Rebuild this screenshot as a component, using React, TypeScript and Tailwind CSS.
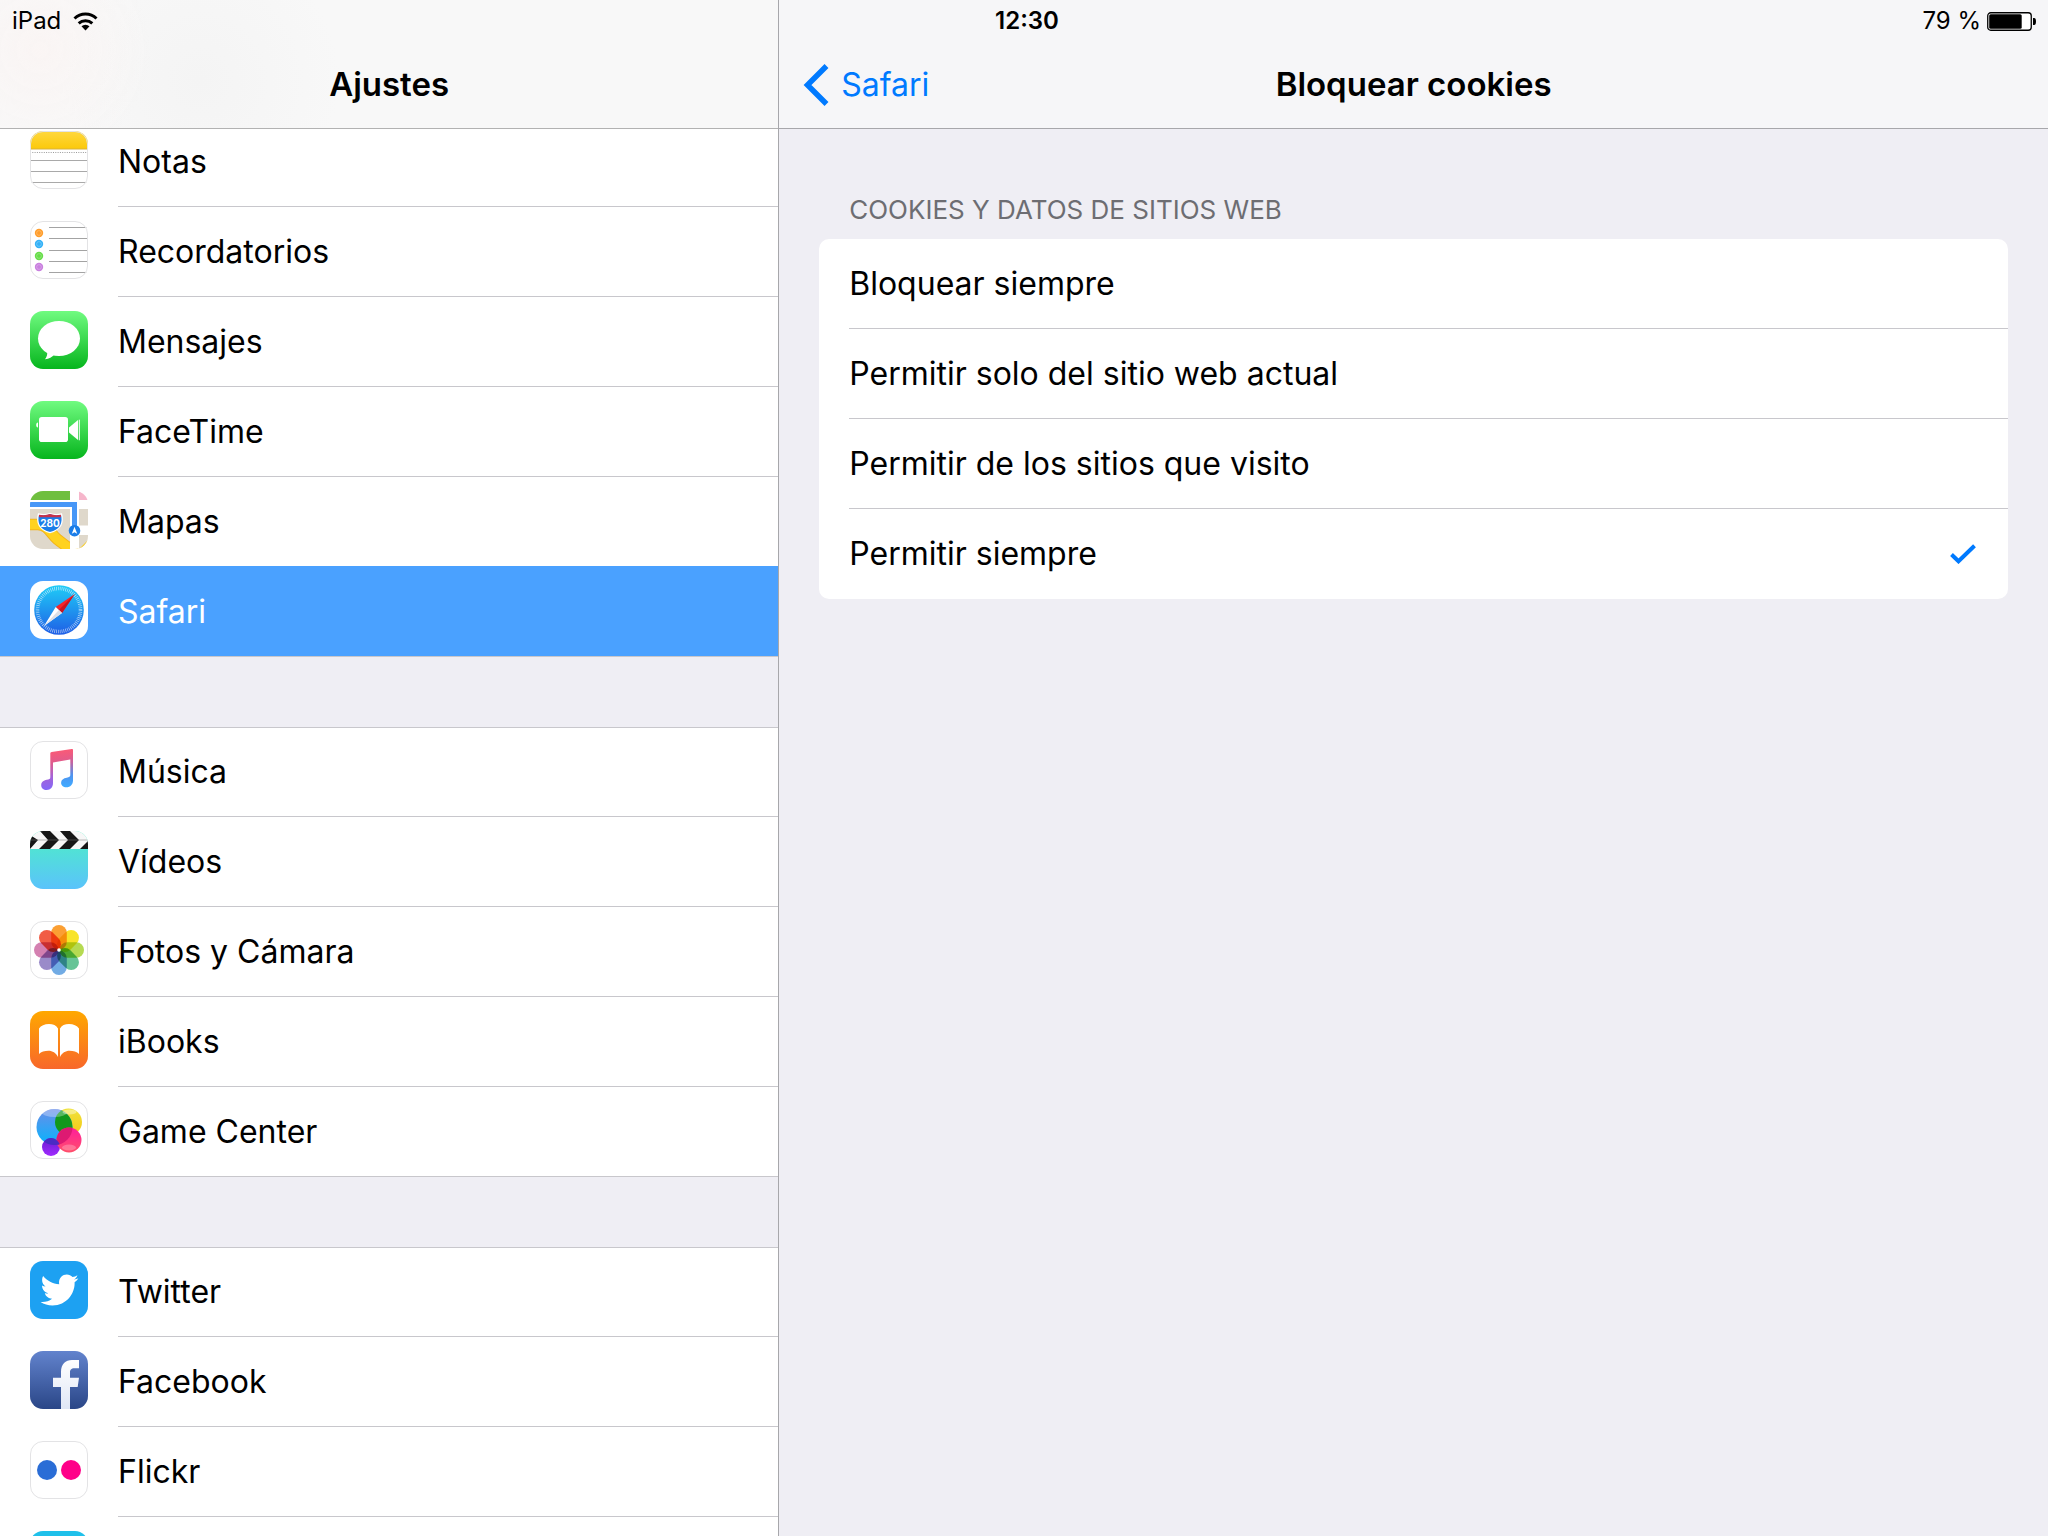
import { useState, type ReactNode } from "react";
import { FaTwitter } from "react-icons/fa";

/* App icons are all drawn on a 58x58 tile. */
function Tile({ id, fill = "#fff", outline = false, children }: { id: string; fill?: string; outline?: boolean; children?: ReactNode }) {
  return (
    <svg className="size-[58px] shrink-0" viewBox="0 0 58 58" aria-hidden="true">
      <defs>
        <clipPath id={`${id}-clip`}>
          <rect width="58" height="58" rx="13" />
        </clipPath>
      </defs>
      <g clipPath={`url(#${id}-clip)`}>
        <rect width="58" height="58" fill={fill} />
        {children}
      </g>
      {outline && <rect x="0.5" y="0.5" width="57" height="57" rx="12.5" fill="none" stroke="#e3e3e5" />}
    </svg>
  );
}

function Gradient({ id, from, to }: { id: string; from: string; to: string }) {
  return (
    <linearGradient id={id} x1="0" y1="0" x2="0" y2="1">
      <stop offset="0" stopColor={from} />
      <stop offset="1" stopColor={to} />
    </linearGradient>
  );
}

function NotesIcon() {
  return (
    <Tile id="notes" outline>
      <Gradient id="notes-top" from="#ffd83f" to="#fbc90a" />
      <path d="M0 21.5H58" stroke="#9a9a9a" strokeDasharray="1 1.3" />
      <path d="M0 29.5H58M0 40.5H58M0 51.5H58" stroke="#a9a9a9" />
      <rect x="0" y="0" width="58" height="18" fill="url(#notes-top)" />
      <path d="M0 18H58" stroke="#d9b23a" />
    </Tile>
  );
}

function RemindersIcon() {
  const dots = [
    { y: 12, color: "#ff9d2b" },
    { y: 23, color: "#33b1f7" },
    { y: 35, color: "#66dd48" },
    { y: 46, color: "#c97fdf" },
  ];
  return (
    <Tile id="reminders" outline>
      <path d="M19 6.5H58M19 17.5H58M19 29.5H58M19 40.5H58M19 51.5H58" stroke="#a3a3a3" />
      {dots.map((d) => (
        <g key={d.y}>
          <circle cx="9" cy={d.y} r="4.2" fill={d.color} />
          <circle cx="9" cy={d.y} r="2.4" fill="none" stroke="#fff" strokeOpacity="0.35" strokeWidth="0.7" />
        </g>
      ))}
    </Tile>
  );
}

function MessagesIcon() {
  return (
    <Tile id="messages" fill="url(#messages-bg)">
      <Gradient id="messages-bg" from="#70fb80" to="#06b51d" />
      <ellipse cx="29" cy="27.5" rx="21" ry="17.6" fill="#fff" />
      <path d="M17 40c0.8 3.5-0.3 6-2 8.3 4.2-0.4 7-2 9.500-4.800z" fill="#fff" />
    </Tile>
  );
}

function FaceTimeIcon() {
  return (
    <Tile id="facetime" fill="url(#facetime-bg)">
      <Gradient id="facetime-bg" from="#70fb80" to="#06b51d" />
      <rect x="9" y="16" width="29" height="25" rx="2.8" fill="#fff" />
      <path d="M8 21.5v5c-1.3 0-1.8-1-1.8-2.5S6.700 21.5 8 21.5z" fill="#fff" />
      <path d="M39 26.5L48 19v20l-9-7.500z" fill="#fff" />
      <path d="M49.3 18.7v20.600" stroke="#fff" strokeWidth="1" />
    </Tile>
  );
}

function MapsIcon() {
  return (
    <Tile id="maps">
      <rect width="40" height="9" fill="#6fbf3f" />
      <rect x="49" width="9" height="9" fill="#f6b6cb" />
      <rect y="18" width="40" height="40" fill="#dfd8cb" />
      <rect x="49" y="18" width="9" height="16.5" fill="#dfd8cb" />
      <rect x="49" y="44" width="9" height="14" fill="#dfd8cb" />
      <path d="M0 33.5H8C18 34 21 43 27 48S37 55 45 62" fill="none" stroke="#f3b41c" strokeWidth="11.500" />
      <path d="M0 33.5H8C18 34 21 43 27 48S37 55 45 62" fill="none" stroke="#ffd21f" strokeWidth="9.500" />
      <path d="M49 58L58 49v9z" fill="#fbd02a" />
      <rect x="40" y="18" width="9" height="40" fill="#fff" />
      <path d="M0 13.5H44.5V40" fill="none" stroke="#4797f7" strokeWidth="5" />
      <path d="M8.500 23c4 1 8 1 11.500-0.500 3.500 1.500 7.500 1.500 11.500 0.500 2.500 9-1 16-11.500 18.700C9.500 39 6 32 8.500 23z" fill="#1b7de8" stroke="#fff" strokeWidth="1.300" />
      <path d="M9 23.700c4 0.800 7.500 0.600 11-0.600 3.500 1.200 7 1.400 11 0.600v2.600H9z" fill="#c8324a" />
      <text x="20" y="36" textAnchor="middle" fontFamily="Inter, sans-serif" fontWeight="700" fontSize="10" fill="#fff">
        280
      </text>
      <circle cx="44.5" cy="39.700" r="5.800" fill="#1b7de8" />
      <path d="M44.5 35.800l2.700 7-2.700-1.600-2.700 1.600z" fill="#fff" />
    </Tile>
  );
}

function SafariIcon() {
  return (
    <Tile id="safari">
      <Gradient id="safari-bg" from="#1fcdf7" to="#1f5ee6" />
      <circle cx="29" cy="29" r="24.800" fill="url(#safari-bg)" />
      <circle cx="29" cy="29" r="21.500" fill="none" stroke="#fff" strokeOpacity="0.65" strokeWidth="3.600" strokeDasharray="0.7 1.180" />
      <path d="M44.800 13L25.700 26l6.300 6z" fill="#f5242b" />
      <path d="M44.800 13L28.900 29l3.100 3z" fill="#c9151f" />
      <path d="M14 45l11.700-19 6.300 6z" fill="#fff" />
      <path d="M14 45l14.900-16 3.100 3z" fill="#dcdfe6" />
    </Tile>
  );
}

function MusicIcon() {
  return (
    <Tile id="music" outline>
      <linearGradient id="music-note" x1="26" y1="8" x2="30" y2="50" gradientUnits="userSpaceOnUse">
        <stop offset="0" stopColor="#fd5a74" />
        <stop offset="0.32" stopColor="#e05b8d" />
        <stop offset="0.65" stopColor="#a463d8" />
        <stop offset="1" stopColor="#7d68ff" />
      </linearGradient>
      <linearGradient id="music-right" x1="0" y1="8" x2="0" y2="45" gradientUnits="userSpaceOnUse">
        <stop offset="0" stopColor="#fd5a74" />
        <stop offset="0.35" stopColor="#c8629e" />
        <stop offset="0.7" stopColor="#4f92ee" />
        <stop offset="1" stopColor="#41a9ff" />
      </linearGradient>
      <path d="M20.300 12.600c0-0.900 0.500-1.300 1.300-1.500L41.700 8c0.900-0.200 1.300 0.300 1.300 1v9l-20 3.500v20.500c0 4-2.300 7-6.300 7-3.300 0-5.500-2-5.500-4.800 0-3 2.300-4.900 5.500-5.400 2.400-0.400 3.600-0.700 3.600-2.600z" fill="url(#music-note)" />
      <path d="M40.300 17V34c0 1.800-1 2.300-3.500 2.700-3.400 0.500-5.700 2.200-5.700 5 0 2.500 2 4.500 5.200 4.500 4.300 0 6.700-2.700 6.700-7V9z" fill="url(#music-right)" />
    </Tile>
  );
}

function VideosIcon() {
  return (
    <Tile id="videos" fill="url(#videos-bg)">
      <Gradient id="videos-bg" from="#4df0c4" to="#5ac3fb" />
      <rect width="58" height="18" fill="#f7f7f7" />
      <path d="M0 4L8 9 0 18zM10 0H20L29 9 20 18H9L18 9zM30 0H40L49 9 40 18H29L38 9zM50 18L58 10V18z" fill="#161616" />
      <path d="M0 9H58" stroke="#777" strokeWidth="0.500" />
    </Tile>
  );
}

function PhotosIcon() {
  const petals = ["#fb9f33", "#f8e42a", "#b5da52", "#66c496", "#71abe4", "#9a8bc9", "#d480b1", "#f15c45"];
  return (
    <Tile id="photos" outline>
      {petals.map((color, i) => (
        <rect key={color} x="21.200" y="4" width="15.600" height="24.500" rx="7.800" fill={color} transform={`rotate(${i * 45} 29 29)`} style={{ mixBlendMode: "multiply" }} />
      ))}
      <circle cx="29" cy="29" r="1.800" fill="#fff" />
    </Tile>
  );
}

function BooksIcon() {
  return (
    <Tile id="books" fill="url(#books-bg)">
      <Gradient id="books-bg" from="#ffa800" to="#f8672a" />
      <path d="M28 46V17.500C26.500 14.300 23 13 19 13c-4.500 0-8 1.500-10 4.500V43c2.200-2 5.500-3.200 9.500-3.200S26 42 28 46z" fill="#fff" />
      <path d="M30 46V17.500C31.500 14.300 35 13 39 13c4.500 0 8 1.500 10 4.500V43c-2.200-2-5.500-3.200-9.500-3.200S32 42 30 46z" fill="#fff" />
    </Tile>
  );
}

function GameCenterIcon() {
  return (
    <Tile id="games" outline>
      <Gradient id="games-blue" from="#6a8de8" to="#06b4fd" />
      <Gradient id="games-yellow" from="#efe23a" to="#f5c816" />
      <Gradient id="games-pink" from="#ff1d9c" to="#ff4f6a" />
      <Gradient id="games-purple" from="#6a1bd0" to="#a02bff" />
      <clipPath id="games-blue-clip">
        <circle cx="24.500" cy="26" r="18" />
      </clipPath>
      <circle cx="38.500" cy="21" r="13.500" fill="url(#games-yellow)" />
      <circle cx="24.500" cy="26" r="18" fill="url(#games-blue)" />
      <g clipPath="url(#games-blue-clip)">
        <circle cx="38.500" cy="21" r="13.500" fill="#12981c" />
        <ellipse cx="24.500" cy="12" rx="12" ry="4" fill="#fff" opacity="0.300" />
      </g>
      <ellipse cx="39.500" cy="11" rx="7" ry="2.500" fill="#fff" opacity="0.400" />
      <circle cx="21" cy="46" r="9" fill="url(#games-purple)" />
      <circle cx="39" cy="39" r="12.500" fill="url(#games-pink)" />
      <g clipPath="url(#games-blue-clip)">
        <circle cx="39" cy="39" r="12.500" fill="#dd1a72" />
        <circle cx="21" cy="46" r="9" fill="#4a2bc4" />
      </g>
      <ellipse cx="39" cy="46.500" rx="7" ry="3" fill="#fff" opacity="0.250" />
    </Tile>
  );
}

function TwitterIcon() {
  return (
    <Tile id="twitter" fill="#1da1f2">
      <FaTwitter x="10.500" y="10" size={38} color="#fff" />
    </Tile>
  );
}

function FacebookIcon() {
  return (
    <Tile id="facebook" fill="url(#facebook-bg)">
      <Gradient id="facebook-bg" from="#6283cd" to="#2a4687" />
      <Gradient id="facebook-f" from="#ffffff" to="#dfe6f5" />
      <path d="M31 58V36H23V26.700H31V21C31 13 35.500 9 42 9H49V17.300H44.500C41 17.300 40 19 40 21.500V26.700H49L47.700 36H40V58z" fill="url(#facebook-f)" />
    </Tile>
  );
}

function FlickrIcon() {
  return (
    <Tile id="flickr" outline>
      <circle cx="17" cy="29" r="10" fill="#2a6dd6" />
      <circle cx="41" cy="29" r="10" fill="#ff0089" />
    </Tile>
  );
}

type Entry = { label: string; icon: ReactNode };

const groups: Entry[][] = [
  [
    { label: "Notas", icon: <NotesIcon /> },
    { label: "Recordatorios", icon: <RemindersIcon /> },
    { label: "Mensajes", icon: <MessagesIcon /> },
    { label: "FaceTime", icon: <FaceTimeIcon /> },
    { label: "Mapas", icon: <MapsIcon /> },
    { label: "Safari", icon: <SafariIcon /> },
  ],
  [
    { label: "Música", icon: <MusicIcon /> },
    { label: "Vídeos", icon: <VideosIcon /> },
    { label: "Fotos y Cámara", icon: <PhotosIcon /> },
    { label: "iBooks", icon: <BooksIcon /> },
    { label: "Game Center", icon: <GameCenterIcon /> },
  ],
  [
    { label: "Twitter", icon: <TwitterIcon /> },
    { label: "Facebook", icon: <FacebookIcon /> },
    { label: "Flickr", icon: <FlickrIcon /> },
    { label: "", icon: <Tile id="last" fill="#1fc0ea" /> },
  ],
];

const options = ["Bloquear siempre", "Permitir solo del sitio web actual", "Permitir de los sitios que visito", "Permitir siempre"];

function StatusBar() {
  return (
    <div className="absolute inset-x-0 top-0 z-20 grid h-[42px] grid-cols-3 items-center px-3 text-2xl">
      <div className="flex items-center gap-3">
        <span>iPad</span>
        <svg className="h-[19px] w-[25px]" viewBox="0 0 25 19" fill="none" stroke="#000" strokeWidth="3" aria-hidden="true">
          <path d="M1.500 6.500a16 16 0 0 1 22 0" />
          <path d="M5.700 11.300a10 10 0 0 1 13.600 0" />
          <path d="M12.500 18.500l-4-4.200a5.800 5.800 0 0 1 8 0z" fill="#000" stroke="none" />
        </svg>
      </div>
      <span className="pl-1.5 text-center font-semibold">12:30</span>
      <div className="flex items-center justify-end gap-1.5">
        <span>79 %</span>
        <svg className="h-[19px] w-[49px]" viewBox="0 0 49 19" aria-hidden="true">
          <rect x="0.750" y="0.750" width="43.500" height="17.500" rx="3" fill="#fff" stroke="#000" strokeWidth="1.300" />
          <rect x="2.200" y="2.200" width="32.500" height="14.600" rx="1.500" fill="#000" />
          <path d="M46 6h1.200c1 0 1.800 1 1.800 3.500S48.200 13 47.200 13H46z" fill="#000" />
        </svg>
      </div>
    </div>
  );
}

function Sidebar() {
  return (
    <aside className="flex w-[38%] shrink-0 flex-col">
      <header className="relative z-10 flex h-[129px] shrink-0 items-center justify-center border-b border-[#b2b2b2] bg-[#f8f8f8] bg-[radial-gradient(circle_at_40px_50px,#faf5f4_0,transparent_110px),radial-gradient(circle_at_200px_80px,#f4f4f4_0,transparent_140px)] pt-[42px]">
        <h1 className="text-[33px] font-semibold">Ajustes</h1>
      </header>
      <nav className="-mt-3 flex flex-col gap-[70px]">
        {groups.map((group, i) => (
          <ul key={i} className="bg-white shadow-[inset_0_1px_0_#c8c7cc,inset_0_-1px_0_#c8c7cc]">
            {group.map(({ label, icon }, j) => {
              const active = label === "Safari";
              return (
                <li key={j} className={active ? "relative bg-[#4aa1ff] text-white shadow-[0_-1px_0_#4aa1ff,inset_0_-1px_0_#c8c7cc]" : ""}>
                  <a href="#" aria-current={active ? "page" : undefined} className="flex h-[90px] items-center gap-[30px] pl-[30px]">
                    <span className="pb-1">{icon}</span>
                    <span className={`flex h-full flex-1 items-center ${j === group.length - 1 ? "" : "border-b border-[#c8c7cc]"}`}>{label}</span>
                  </a>
                </li>
              );
            })}
          </ul>
        ))}
      </nav>
    </aside>
  );
}

function CookieSettings() {
  const [selected, setSelected] = useState("Permitir siempre");

  return (
    <main className="min-w-0 flex-1 border-l border-[#a7a7ab] bg-[#efeef4]">
      <header className="grid h-[129px] grid-cols-[1fr_auto_1fr] items-center border-b border-[#a7a7ab] bg-[#f6f6f8] pt-[42px]">
        <button type="button" className="flex items-center gap-3 justify-self-start pl-6 text-[#007aff]">
          <svg className="h-[42px] w-[26px]" viewBox="0 0 26 42" fill="none" stroke="currentColor" strokeWidth="5.500" aria-hidden="true">
            <path d="M23.500 2L4.500 21l19 19" />
          </svg>
          Safari
        </button>
        <h2 className="text-[33px] font-semibold">Bloquear cookies</h2>
      </header>

      <fieldset aria-labelledby="cookies-title" className="px-10 pt-16">
        <p id="cookies-title" className="pb-3 pl-[30px] text-[26px] leading-[34px] text-[#6d6d72]">
          COOKIES Y DATOS DE SITIOS WEB
        </p>
        <div className="overflow-hidden rounded-[10px] bg-white pl-[30px]">
          {options.map((option) => (
            <label key={option} className="flex h-[90px] items-center justify-between border-b border-[#c8c7cc] pr-8 last:border-b-0">
              {option}
              <input type="radio" name="cookies" className="peer sr-only" checked={selected === option} onChange={() => setSelected(option)} />
              <svg className="hidden h-5 w-[26px] text-[#007aff] peer-checked:block" viewBox="0 0 26 20" fill="none" stroke="currentColor" strokeWidth="4" aria-hidden="true">
                <path d="M1.500 10.500L8.500 17.300 24.500 1.700" />
              </svg>
            </label>
          ))}
        </div>
      </fieldset>
    </main>
  );
}

export default function App() {
  return (
    <div className="relative flex h-screen overflow-hidden bg-[#efeef4] font-[Inter,sans-serif] text-[32px] text-black">
      <StatusBar />
      <Sidebar />
      <CookieSettings />
    </div>
  );
}
